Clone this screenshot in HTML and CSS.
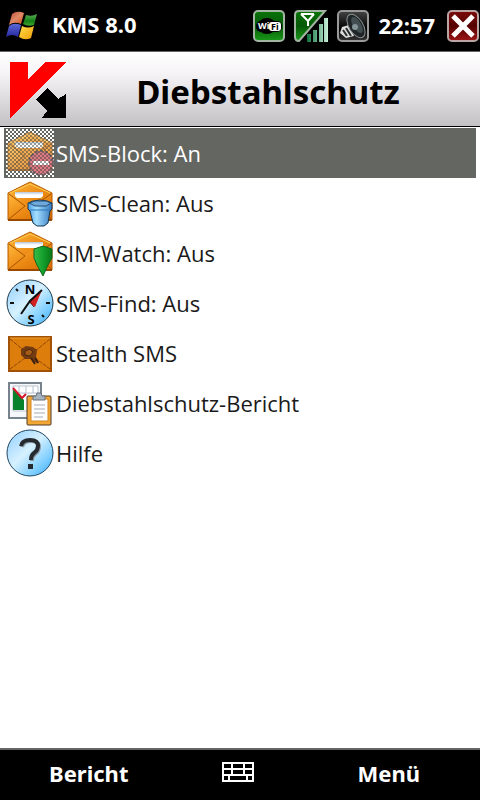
FILE: index.html
```html
<!DOCTYPE html>
<html lang="de">
<head>
  <meta charset="UTF-8">
  <meta name="viewport" content="width=device-width, initial-scale=1.0">
  <title>KMS 8.0</title>
  <link rel="stylesheet" href="styles.css">
</head>
<body>
  <!-- Status bar -->
  <header class="status-bar">
    <button class="icon-button" type="button" aria-label="Start">
      <svg class="flag" viewBox="0 0 32 30" width="32" height="30">
        <defs>
          <linearGradient id="flag-red" x1="0" y1="0" x2="1" y2="1"><stop offset="0" stop-color="#b84a36"/><stop offset=".5" stop-color="#e08a68"/><stop offset="1" stop-color="#d04a18"/></linearGradient>
          <linearGradient id="flag-green" x1="0" y1="0" x2="0" y2="1"><stop offset="0" stop-color="#5fae55"/><stop offset=".6" stop-color="#128018"/><stop offset="1" stop-color="#46a82c"/></linearGradient>
          <linearGradient id="flag-blue" x1="0" y1="0" x2="0" y2="1"><stop offset="0" stop-color="#5d6ad8"/><stop offset="1" stop-color="#2727a0"/></linearGradient>
          <linearGradient id="flag-yellow" x1="0" y1="0" x2="1" y2="1"><stop offset="0" stop-color="#ffe04a"/><stop offset="1" stop-color="#f09a08"/></linearGradient>
        </defs>
        <path d="M6 3Q11-1 18 2L15 13Q8 10 3 14Z" fill="url(#flag-red)"/>
        <path d="M20 4Q26 6 31 3L28 14Q22 16 17 13Z" fill="url(#flag-green)"/>
        <path d="M3 15Q8 11 15 14L12 26Q6 22 0 26Z" fill="url(#flag-blue)"/>
        <path d="M16 15Q22 18 28 15L25 27Q19 30 13 26Z" fill="url(#flag-yellow)"/>
      </svg>
    </button>
    <span class="app-name">KMS 8.0</span>
    <div class="tray">
      <svg class="tray-icon" viewBox="0 0 32 32" width="32" height="32" role="img" aria-label="WiFi">
        <defs><linearGradient id="green" x1="0" y1="0" x2="0" y2="1"><stop offset="0" stop-color="#087408"/><stop offset=".5" stop-color="#075807"/><stop offset="1" stop-color="#199b19"/></linearGradient></defs>
        <rect x="1" y="1" width="30" height="30" rx="4" fill="url(#green)" stroke="#a3b5a3" stroke-width="2"/>
        <ellipse cx="14" cy="16" rx="9" ry="8" fill="#000"/>
        <rect x="3" y="11" width="26" height="11" rx="5" fill="#000"/>
        <text class="wifi-text" x="5" y="19" fill="#fff">Wi</text>
        <rect x="16" y="12" width="12" height="9" rx="3" fill="#fff"/>
        <text class="wifi-text" x="18" y="20" fill="#000">Fi</text>
      </svg>
      <svg class="tray-icon" viewBox="0 0 34 32" width="34" height="32" role="img" aria-label="Signal">
        <defs><linearGradient id="bar" x1="0" y1="0" x2="1" y2="0"><stop offset="0" stop-color="#0b713c"/><stop offset="1" stop-color="#c9f1d8"/></linearGradient></defs>
        <path d="M5 1H31L5 31Q1 31 1 27V5Q1 1 5 1Z" fill="url(#green)" stroke="#a3b5a3" stroke-width="2"/>
        <path d="M7 4L14 11L20 4M7 4H20M14 10V16" fill="none" stroke="#fff" stroke-width="2"/>
        <path d="M13 24h4v8h-4zM19 20h4v12h-4zM25 14h4v18h-4zM30 8h4v24h-4z" fill="url(#bar)"/>
      </svg>
      <svg class="tray-icon" viewBox="0 0 32 32" width="32" height="32" role="img" aria-label="Ton">
        <defs><linearGradient id="grey" x1="0" y1="0" x2="0" y2="1"><stop offset="0" stop-color="#454545"/><stop offset=".6" stop-color="#000"/><stop offset="1" stop-color="#363636"/></linearGradient></defs>
        <rect x="1" y="1" width="30" height="30" rx="4" fill="url(#grey)" stroke="#999" stroke-width="2"/>
        <path d="M5 17L12 15L17 26L9 28L3 23Z" fill="#dedede"/>
        <path d="M6 20L10 26M9 18L14 26" stroke="#292d2e" stroke-width="2"/>
        <ellipse cx="19" cy="16" rx="7" ry="13" fill="#202628" stroke="#899092" stroke-width="1" transform="rotate(-32 19 16)"/>
        <ellipse cx="20" cy="15" rx="4" ry="9" fill="#424e51" transform="rotate(-32 20 15)"/>
        <circle cx="18" cy="17" r="3" fill="#849498"/>
      </svg>
      <time class="clock">22:57</time>
      <button class="icon-button" type="button" aria-label="Schließen">
        <svg viewBox="0 0 32 32" width="32" height="32">
          <defs><linearGradient id="close" x1="0" y1="0" x2="0" y2="1"><stop offset="0" stop-color="#7c0b0b"/><stop offset=".5" stop-color="#500"/><stop offset="1" stop-color="#9c1616"/></linearGradient></defs>
          <rect x="1" y="1" width="30" height="30" rx="4" fill="url(#close)" stroke="#bba4a4" stroke-width="2"/>
          <path d="M6 6L26 26M26 6L6 26" stroke="#fff" stroke-width="5"/>
        </svg>
      </button>
    </div>
  </header>

  <!-- Title -->
  <div class="title-bar">
    <svg class="logo" viewBox="0 0 56 56" width="56" height="56" shape-rendering="crispEdges" role="img" aria-label="Kaspersky">
      <path d="M0 0H18V17L35 0H56L0 56Z" fill="#f00"/>
      <path d="M37 26L48 37L56 32V56H32L37 49L26 38Z" fill="#000"/>
    </svg>
    <h1>Diebstahlschutz</h1>
  </div>

  <!-- Functions -->
  <main>
    <ul class="menu">
      <li>
        <button class="item selected" type="button">
          <svg class="item-icon" viewBox="0 0 48 48" width="48" height="48">
            <defs>
              <linearGradient id="orange" x1="0" y1="0" x2="1" y2="1"><stop offset="0" stop-color="#ffb83b"/><stop offset=".5" stop-color="#ed8c16"/><stop offset="1" stop-color="#d76b00"/></linearGradient>
              <linearGradient id="paper" x1="0" y1="0" x2="0" y2="1"><stop offset="0" stop-color="#b4c4d8"/><stop offset=".5" stop-color="#fff"/></linearGradient>
              <pattern id="dither" width="4" height="4" patternUnits="userSpaceOnUse"><path d="M0 0h2v2h-2zM2 2h2v2h-2z" fill="#fff"/></pattern>
              <pattern id="shade" width="4" height="4" patternUnits="userSpaceOnUse"><path d="M2 0h2v2h-2zM0 2h2v2h-2z" fill="#646662"/></pattern>
              <g id="envelope">
                <path d="M2 14L24 3L46 14V41H2Z" fill="url(#orange)" stroke="#b65a00"/>
                <path d="M4 14L24 5L44 14" fill="none" stroke="#ffd052"/>
                <path d="M3 15L19 27Q25 18 31 25L45 15V40H3Z" fill="url(#orange)"/>
                <path d="M3 15L19 27L3 40M31 25L45 40M31 25L45 15" fill="none" stroke="#a45200"/>
                <path d="M9 13H37V17L35 19H11L9 17Z" fill="url(#paper)"/>
                <path d="M2 41H46" stroke="#984b00" stroke-width="2"/>
              </g>
            </defs>
            <rect width="48" height="48" fill="url(#dither)" shape-rendering="crispEdges"/>
            <g opacity=".75">
              <use href="#envelope"/>
              <circle cx="35" cy="34" r="12" fill="#d6505e" stroke="#44323d" stroke-width="2" stroke-dasharray="3 2"/>
              <path d="M27 34H43" stroke="#fff" stroke-width="4"/>
            </g>
            <rect width="48" height="48" fill="url(#shade)" fill-opacity=".5" shape-rendering="crispEdges"/>
          </svg>
          <span>SMS-Block: An</span>
        </button>
      </li>
      <li>
        <button class="item" type="button">
          <svg class="item-icon" viewBox="0 0 48 48" width="48" height="48">
            <defs><linearGradient id="bucket" x1="0" y1="0" x2="1" y2="0"><stop offset="0" stop-color="#4d9fe4"/><stop offset=".35" stop-color="#a4deff"/><stop offset="1" stop-color="#3578bd"/></linearGradient></defs>
            <use href="#envelope"/>
            <path d="M22 24L27 22L34 21L41 22L46 24V30L44 32L42 44L38 47H31L27 44L24 32L22 30Z" fill="url(#bucket)" stroke="#16354d" stroke-width="1"/>
            <path d="M23 24L29 27H40L45 24L40 22H29Z" fill="#6fa9dc" stroke="#204f78"/>
            <path d="M24 31H44" stroke="#2876bb"/>
          </svg>
          <span>SMS-Clean: Aus</span>
        </button>
      </li>
      <li>
        <button class="item" type="button">
          <svg class="item-icon" viewBox="0 0 48 48" width="48" height="48">
            <defs><linearGradient id="pin" x1="0" y1="0" x2="1" y2="0"><stop offset="0" stop-color="#39bd49"/><stop offset=".5" stop-color="#149f2c"/><stop offset="1" stop-color="#087819"/></linearGradient></defs>
            <use href="#envelope"/>
            <path d="M37 17L46 20V29L42 36L37 47L31 36L28 29V20Z" fill="url(#pin)" stroke="#12651e"/>
          </svg>
          <span>SIM-Watch: Aus</span>
        </button>
      </li>
      <li>
        <button class="item" type="button">
          <svg class="item-icon" viewBox="0 0 48 48" width="48" height="48">
            <defs>
              <linearGradient id="sky" x1="0" y1="0" x2="1" y2="1"><stop offset="0" stop-color="#8fcdff"/><stop offset=".45" stop-color="#d6f1ff"/><stop offset=".75" stop-color="#7dceff"/><stop offset="1" stop-color="#35a8f2"/></linearGradient>
            </defs>
            <circle cx="24" cy="24" r="23" fill="url(#sky)" stroke="#1f3948" stroke-width="1"/>
            <path d="M4 24H8M40 24H44M10 10L12 12M36 36L38 38" stroke="#111" stroke-width="2"/>
            <path d="M23 22L36 11L29 28L24 24Z" fill="#d32020"/>
            <path d="M15 35L24 22L36 11" fill="none" stroke="#111" stroke-width="2"/>
            <path d="M24 23L28 28" stroke="#681010"/>
            <text class="compass-text" x="24" y="15" text-anchor="middle">N</text>
            <text class="compass-text" x="25" y="45" text-anchor="middle">S</text>
          </svg>
          <span>SMS-Find: Aus</span>
        </button>
      </li>
      <li>
        <button class="item" type="button">
          <svg class="item-icon" viewBox="0 0 48 48" width="48" height="48">
            <rect x="3" y="8" width="42" height="34" fill="#dc7d0c" stroke="#a25207" stroke-width="2"/>
            <path d="M4 9H44" stroke="#f0a12b"/>
            <path d="M4 10L20 23M44 10L28 23M4 40L19 29M44 40L29 29" stroke="#8f4808" stroke-dasharray="4 1"/>
            <path d="M15 20L20 17L27 18L31 21L30 28L33 34L28 33L25 30L19 30L15 26Z" fill="#733b12"/>
            <path d="M19 22L24 20L27 23L24 27L19 26Z" fill="#a55b18" stroke="#4d260c"/>
            <path d="M25 29L29 35M29 29L32 34" stroke="#3d210d" stroke-width="2"/>
          </svg>
          <span>Stealth SMS</span>
        </button>
      </li>
      <li>
        <button class="item" type="button">
          <svg class="item-icon" viewBox="0 0 48 48" width="48" height="48">
            <rect x="3" y="4" width="32" height="35" fill="#f5f7fa" stroke="#76838d" stroke-width="2"/>
            <path d="M7 7H32V32H7Z" fill="#fff" stroke="#bcc5d0"/>
            <path d="M13 7V14M20 7V14M27 7V14M7 14H32" stroke="#b5c0cc"/>
            <path d="M7 10L18 21V31H7Z" fill="#08832b"/>
            <path d="M7 9L16 19L20 15" fill="none" stroke="#d91529" stroke-width="2"/>
            <rect x="21" y="17" width="24" height="29" rx="1" fill="#f1a837" stroke="#503b24" stroke-width="1"/>
            <path d="M25 20H42V42H25Z" fill="#fff" stroke="#d4851d"/>
            <path d="M28 26H39M28 30H39M28 34H39M28 38H37" stroke="#a2acb7" stroke-width="1"/>
            <path d="M27 21V17H30L31 14H35L36 17H39V21Z" fill="#a7b3bf" stroke="#65717c"/>
          </svg>
          <span>Diebstahlschutz-Bericht</span>
        </button>
      </li>
      <li>
        <button class="item" type="button">
          <svg class="item-icon" viewBox="0 0 48 48" width="48" height="48">
            <circle cx="24" cy="24" r="23" fill="url(#sky)" stroke="#1f4660" stroke-width="1"/>
            <path d="M16 18Q17 12 25 12Q33 12 33 18Q33 22 29 25Q26 27 26 32" fill="none" stroke="#8c9aa3" stroke-width="4"/>
            <path d="M15 17Q16 11 24 11Q32 11 32 17Q32 21 28 24Q25 26 25 31" fill="none" stroke="#252a30" stroke-width="4"/>
            <rect x="22" y="35" width="5" height="5" fill="#252a30"/>
          </svg>
          <span>Hilfe</span>
        </button>
      </li>
    </ul>
  </main>

  <!-- Softkeys -->
  <footer class="softkeys">
    <button class="softkey" type="button">Bericht</button>
    <button class="icon-button" type="button" aria-label="Tastatur">
      <svg class="keyboard" viewBox="0 0 32 20" width="32" height="20" shape-rendering="crispEdges">
        <path d="M1 1H31V19H1ZM1 7H31M1 13H31M10 1V13M22 1V13M7 13V19M25 13V19" fill="none" stroke="#fff" stroke-width="2"/>
      </svg>
    </button>
    <button class="softkey" type="button">Menü</button>
  </footer>
</body>
</html>
```
FILE: styles.css
```css
* {
  box-sizing: border-box;
}
body {
  display: flex;
  flex-direction: column;
  min-height: 100vh;
  margin: 0;
  background-color: #fff;
  font-family: "Noto Sans", Tahoma, sans-serif;
}
button {
  padding: 0;
  border: 0;
  background: none;
  font: inherit;
  cursor: pointer;
}
svg {
  display: block;
}
/* Status bar */
.status-bar {
  display: flex;
  align-items: center;
  height: 52px;
  padding: 0 1px 0 6px;
  border-bottom: 1px solid #666;
  background-color: #000;
  color: #fff;
  font-size: 22px;
  font-weight: bold;
}
.app-name {
  margin-left: 14px;
  padding-bottom: 4px;
}
.tray {
  display: flex;
  align-items: center;
  gap: 9px;
  margin-left: auto;
}
.wifi-text {
  font-size: 9px;
  font-weight: bold;
}
.clock {
  margin-right: 3px;
  padding-bottom: 2px;
}
/* Title */
.title-bar {
  display: flex;
  align-items: center;
  height: 75px;
  padding: 0 10px;
  border-bottom: 1px solid #000;
  background: linear-gradient(#fff, #f6f3f6 30%, #c3c1c3);
}
.title-bar h1 {
  flex: 1;
  margin: 0;
  padding-top: 6px;
  text-align: center;
  font-size: 33px;
  line-height: 40px;
}
.logo {
  margin-top: 2px;
}
/* Functions */
main {
  flex: 1;
  padding: 1px 4px;
}
.menu {
  margin: 0;
  padding: 0;
  list-style: none;
}
.item {
  display: flex;
  align-items: center;
  gap: 2px;
  width: 100%;
  height: 50px;
  padding-left: 2px;
  color: #1a1a1a;
  font-family: "Open Sans", Tahoma, sans-serif;
  font-size: 22px;
  text-align: left;
}
.item.selected {
  background-color: #646662;
  color: #fff;
}
.compass-text {
  font-size: 13px;
  font-weight: bold;
}
/* Softkeys */
.softkeys {
  display: grid;
  grid-template-columns: 37% 1fr 38%;
  align-items: center;
  height: 52px;
  padding-bottom: 6px;
  border-top: 2px solid #666;
  background-color: #000;
}
.softkey {
  height: 44px;
  padding-top: 2px;
  color: #fff;
  font-size: 22px;
  font-weight: bold;
}
.keyboard {
  margin: 0 auto;
}
```
